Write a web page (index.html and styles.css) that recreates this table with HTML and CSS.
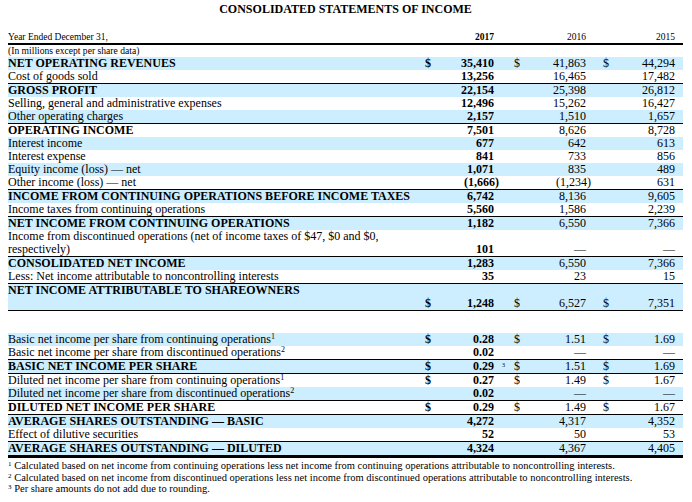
FILE: index.html
```html
<!DOCTYPE html>
<html>
<head>
<meta charset="utf-8">
<link rel="stylesheet" href="styles.css">
</head>
<body>
<div class="page">
  <div class="title">CONSOLIDATED STATEMENTS OF INCOME</div>
  <table class="fin">
    <colgroup>
      <col class="w-lbl"><col class="w-d1"><col class="w-n1"><col class="w-sp"><col class="w-d2"><col class="w-n2"><col class="w-d3"><col class="w-n3"><col class="w-end">
    </colgroup>
    <tr class="hdr">
      <td>Year Ended December 31,</td><td></td><td class="num b">2017</td><td></td><td></td><td class="num">2016</td><td></td><td class="num">2015</td><td></td>
    </tr>
    <tr class="sub"><td colspan="9">(In millions except per share data)</td></tr>

    <tr class="bl bold"><td class="lbl">NET OPERATING REVENUES</td><td class="d b">$</td><td class="num b">35,410</td><td></td><td class="d">$</td><td class="num">41,863</td><td class="d3">$</td><td class="num">44,294</td><td></td></tr>
    <tr><td class="lbl">Cost of goods sold</td><td></td><td class="num b">13,256</td><td></td><td></td><td class="num">16,465</td><td></td><td class="num">17,482</td><td></td></tr>
    <tr class="bl bold tl"><td class="lbl">GROSS PROFIT</td><td></td><td class="num b">22,154</td><td></td><td></td><td class="num">25,398</td><td></td><td class="num">26,812</td><td></td></tr>
    <tr><td class="lbl">Selling, general and administrative expenses</td><td></td><td class="num b">12,496</td><td></td><td></td><td class="num">15,262</td><td></td><td class="num">16,427</td><td></td></tr>
    <tr class="bl"><td class="lbl">Other operating charges</td><td></td><td class="num b">2,157</td><td></td><td></td><td class="num">1,510</td><td></td><td class="num">1,657</td><td></td></tr>
    <tr class="bold tl"><td class="lbl">OPERATING INCOME</td><td></td><td class="num b">7,501</td><td></td><td></td><td class="num">8,626</td><td></td><td class="num">8,728</td><td></td></tr>
    <tr class="bl"><td class="lbl">Interest income</td><td></td><td class="num b">677</td><td></td><td></td><td class="num">642</td><td></td><td class="num">613</td><td></td></tr>
    <tr><td class="lbl">Interest expense</td><td></td><td class="num b">841</td><td></td><td></td><td class="num">733</td><td></td><td class="num">856</td><td></td></tr>
    <tr class="bl"><td class="lbl">Equity income (loss) — net</td><td></td><td class="num b">1,071</td><td></td><td></td><td class="num">835</td><td></td><td class="num">489</td><td></td></tr>
    <tr><td class="lbl">Other income (loss) — net</td><td></td><td class="num b"><span class="neg">(1,666)</span></td><td></td><td></td><td class="num"><span class="neg">(1,234)</span></td><td></td><td class="num">631</td><td></td></tr>
    <tr class="bl bold tl"><td class="lbl">INCOME FROM CONTINUING OPERATIONS BEFORE INCOME TAXES</td><td></td><td class="num b">6,742</td><td></td><td></td><td class="num">8,136</td><td></td><td class="num">9,605</td><td></td></tr>
    <tr><td class="lbl">Income taxes from continuing operations</td><td></td><td class="num b">5,560</td><td></td><td></td><td class="num">1,586</td><td></td><td class="num">2,239</td><td></td></tr>
    <tr class="bl bold tl"><td class="lbl">NET INCOME FROM CONTINUING OPERATIONS</td><td></td><td class="num b">1,182</td><td></td><td></td><td class="num">6,550</td><td></td><td class="num">7,366</td><td></td></tr>
    <tr class="two"><td class="lbl">Income from discontinued operations (net of income taxes of $47, $0 and $0, respectively)</td><td></td><td class="num b">101</td><td></td><td></td><td class="num">—</td><td></td><td class="num">—</td><td></td></tr>
    <tr class="bl bold tl"><td class="lbl">CONSOLIDATED NET INCOME</td><td></td><td class="num b">1,283</td><td></td><td></td><td class="num">6,550</td><td></td><td class="num">7,366</td><td></td></tr>
    <tr><td class="lbl">Less: Net income attributable to noncontrolling interests</td><td></td><td class="num b">35</td><td></td><td></td><td class="num">23</td><td></td><td class="num">15</td><td></td></tr>
    <tr class="bl bold tl two bb"><td class="lbl">NET INCOME ATTRIBUTABLE TO SHAREOWNERS</td><td class="d b">$</td><td class="num b">1,248</td><td></td><td class="d">$</td><td class="num">6,527</td><td class="d3">$</td><td class="num">7,351</td><td></td></tr>

    <tr class="gap"><td colspan="9"></td></tr>

    <tr class="bl"><td class="lbl">Basic net income per share from continuing operations<sup>1</sup></td><td class="d b">$</td><td class="num b">0.28</td><td></td><td class="d">$</td><td class="num">1.51</td><td class="d3">$</td><td class="num">1.69</td><td></td></tr>
    <tr><td class="lbl">Basic net income per share from discontinued operations<sup>2</sup></td><td></td><td class="num b">0.02</td><td></td><td></td><td class="num">—</td><td></td><td class="num">—</td><td></td></tr>
    <tr class="bl bold tl"><td class="lbl">BASIC NET INCOME PER SHARE</td><td class="d b">$</td><td class="num b">0.29</td><td class="note"><sup>3</sup></td><td class="d">$</td><td class="num">1.51</td><td class="d3">$</td><td class="num">1.69</td><td></td></tr>
    <tr class="tl"><td class="lbl">Diluted net income per share from continuing operations<sup>1</sup></td><td class="d b">$</td><td class="num b">0.27</td><td></td><td class="d">$</td><td class="num">1.49</td><td class="d3">$</td><td class="num">1.67</td><td></td></tr>
    <tr class="bl"><td class="lbl">Diluted net income per share from discontinued operations<sup>2</sup></td><td></td><td class="num b">0.02</td><td></td><td></td><td class="num">—</td><td></td><td class="num">—</td><td></td></tr>
    <tr class="bold tl"><td class="lbl">DILUTED NET INCOME PER SHARE</td><td class="d b">$</td><td class="num b">0.29</td><td></td><td class="d">$</td><td class="num">1.49</td><td class="d3">$</td><td class="num">1.67</td><td></td></tr>
    <tr class="bl bold tl"><td class="lbl">AVERAGE SHARES OUTSTANDING — BASIC</td><td></td><td class="num b">4,272</td><td></td><td></td><td class="num">4,317</td><td></td><td class="num">4,352</td><td></td></tr>
    <tr><td class="lbl">Effect of dilutive securities</td><td></td><td class="num b">52</td><td></td><td></td><td class="num">50</td><td></td><td class="num">53</td><td></td></tr>
    <tr class="bl bold tl last"><td class="lbl">AVERAGE SHARES OUTSTANDING — DILUTED</td><td></td><td class="num b">4,324</td><td></td><td></td><td class="num">4,367</td><td></td><td class="num">4,405</td><td></td></tr>
  </table>
  <div class="notes">
    <p><sup>1</sup> Calculated based on net income from continuing operations less net income from continuing operations attributable to noncontrolling interests.</p>
    <p><sup>2</sup> Calculated based on net income from discontinued operations less net income from discontinued operations attributable to noncontrolling interests.</p>
    <p><sup>3</sup> Per share amounts do not add due to rounding.</p>
  </div>
</div>
</body>
</html>
```
FILE: styles.css
```css
body {
  margin: 0;
  background: #fff;
  color: #000;
  font-family: "Liberation Serif", "Times New Roman", serif;
}
.page {
  padding: 3px 9px 0 8px;
}
.title {
  text-align: center;
  font-weight: bold;
  font-size: 12px;
  line-height: 13px;
  margin: 0 0 15px;
}
.fin {
  width: 675px;
  border-collapse: collapse;
  table-layout: fixed;
  font-size: 12px;
}
.w-lbl { width: 412px; }
.w-d1 { width: 16px; }
.w-n1 { width: 58px; }
.w-sp { width: 16px; }
.w-d2 { width: 14px; }
.w-n2 { width: 62px; }
.w-d3 { width: 28px; }
.w-n3 { width: 61px; }
.w-end { width: 8px; }

.fin td {
  padding: 0;
  line-height: 13px;
  white-space: nowrap;
  vertical-align: bottom;
}
.fin td.lbl {
  white-space: normal;
  vertical-align: top;
}
.num { text-align: right; }
.d { text-align: center; }
.d3 { text-align: right; padding-right: 5px !important; }
.b { font-weight: bold; }
.neg { margin-right: -5px; }

.fin tr.hdr td {
  font-size: 9.5px;
  line-height: 12px;
  border-bottom: 2px solid #000;
}
.fin tr.sub td {
  font-size: 9.6px;
  line-height: 12px;
}
.fin tr.bl td { background: #cceeff; }
.fin tr.bold td.lbl { font-weight: bold; }
.fin tr.tl td { border-top: 1px solid #000; }
.fin tr.bb td { border-bottom: 1px solid #000; }
.fin tr.last td { border-bottom: 3px solid #000; }
.fin tr.two td { height: 26px; }
.fin tr.gap td { height: 22px; }

.fin sup {
  font-size: 8px;
  line-height: 0;
  vertical-align: 4px;
  font-weight: normal;
}
.fin td.note {
  text-align: left;
  padding-left: 8px;
}
.fin td.note sup {
  font-size: 6px;
  vertical-align: 3px;
}

.notes {
  margin-top: 2px;
  font-size: 10.5px;
  line-height: 11.5px;
}
.notes p { margin: 0; }
.notes sup {
  font-size: 7px;
  line-height: 0;
  vertical-align: 3px;
}
```
